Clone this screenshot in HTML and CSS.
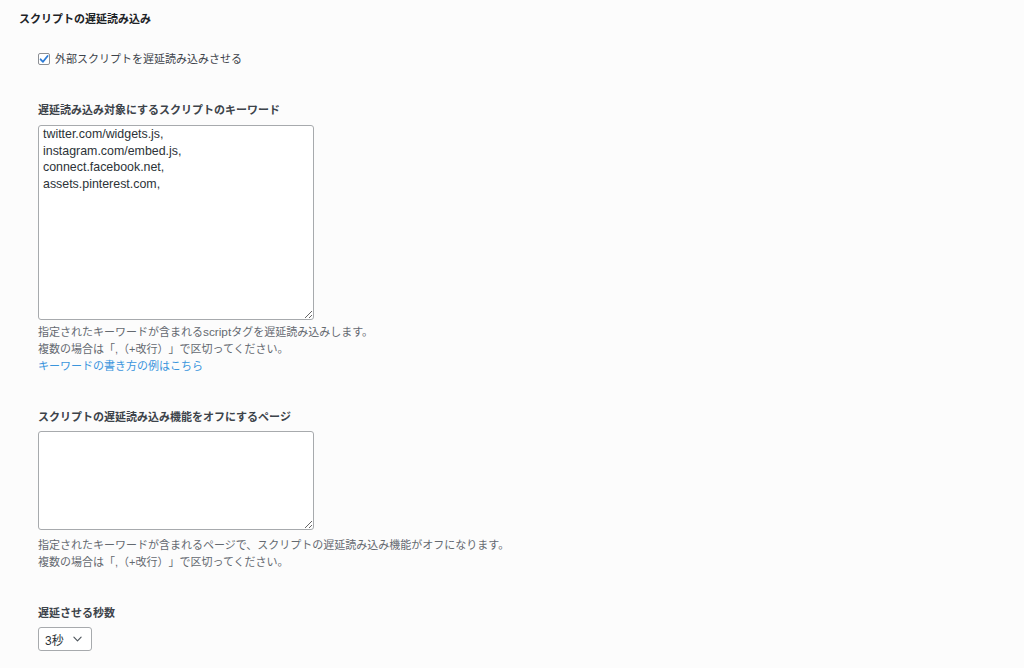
FILE: index.html
```html
<!DOCTYPE html>
<html lang="ja">
<head>
<meta charset="utf-8">
<title>スクリプトの遅延読み込み</title>
<link rel="stylesheet" href="styles.css">
</head>
<body>
<div class="page">
  <h2 class="title">スクリプトの遅延読み込み</h2>
  <div class="section">
    <label class="check-row">
      <span class="checkbox">
        <svg viewBox="0 0 12 12" width="12" height="12"><path d="M2.6 6.3 L5 8.8 L9.6 3" fill="none" stroke="#2b7bd6" stroke-width="1.8" stroke-linecap="round" stroke-linejoin="round"/></svg>
      </span>
      <span>外部スクリプトを遅延読み込みさせる</span>
    </label>

    <div class="field first">
      <div class="label">遅延読み込み対象にするスクリプトのキーワード</div>
      <textarea class="textarea tall">twitter.com/widgets.js,
instagram.com/embed.js,
connect.facebook.net,
assets.pinterest.com,</textarea>
      <p class="help">指定されたキーワードが含まれる<span class="latin">script</span>タグを遅延読み込みします。<br>複数の場合は「,（+改行）」で区切ってください。<br><a class="link" href="#">キーワードの書き方の例はこちら</a></p>
    </div>

    <div class="field second">
      <div class="label">スクリプトの遅延読み込み機能をオフにするページ</div>
      <textarea class="textarea short"></textarea>
      <p class="help help2">指定されたキーワードが含まれるページで、スクリプトの遅延読み込み機能がオフになります。<br>複数の場合は「,（+改行）」で区切ってください。</p>
    </div>

    <div class="field third">
      <div class="label">遅延させる秒数</div>
      <div class="select">
        <span>3秒</span>
        <svg viewBox="0 0 10 6" width="9" height="6"><path d="M1 1 L5 5 L9 1" fill="none" stroke="#50575e" stroke-width="1.3" stroke-linecap="round" stroke-linejoin="round"/></svg>
      </div>
    </div>
  </div>
</div>
</body>
</html>
```

FILE: styles.css
```css
html, body {
  margin: 0;
  padding: 0;
  background: #fcfcfc;
}
body {
  font-family: "Liberation Sans", "Noto Sans CJK JP", sans-serif;
  color: #3c434a;
  font-size: 11px;
  text-spacing-trim: space-all;
}
.page {
  padding: 12px 0 0 19px;
}
.title {
  margin: 0;
  font-size: 11px;
  line-height: 14px;
  font-weight: bold;
  color: #1d2327;
}
.section {
  padding-left: 19px;
}
.check-row {
  display: flex;
  align-items: center;
  gap: 5px;
  margin-top: 26px;
  height: 14px;
  line-height: 14px;
  color: #3c434a;
}
.checkbox {
  width: 10px;
  height: 10px;
  border: 1px solid #8c8f94;
  border-radius: 2px;
  background: #fff;
  display: flex;
  align-items: center;
  justify-content: center;
}
.checkbox svg {
  flex: none;
}
.field.first {
  margin-top: 37px;
}
.field.second {
  margin-top: 35px;
}
.field.third {
  margin-top: 36px;
}
.label {
  font-weight: bold;
  line-height: 14px;
  color: #3c434a;
}
.textarea {
  display: block;
  box-sizing: border-box;
  width: 276px;
  margin: 8px 0 0;
  padding: 0 4px;
  border: 1px solid #a7aaad;
  border-radius: 3px;
  background: #fff;
  font-family: "Liberation Sans", "Noto Sans CJK JP", sans-serif;
  font-size: 12.4px;
  line-height: 16.6px;
  color: #2c3338;
  resize: vertical;
}
.textarea.tall {
  height: 195px;
}
.textarea.short {
  margin-top: 7px;
  height: 99px;
}
.help {
  margin: 4px 0 0;
  line-height: 17px;
  color: #646970;
}
.latin {
  font-size: 11.8px;
}
.help2 {
  margin-top: 7px;
  line-height: 16.5px;
}
.link {
  color: #3a95dc;
  text-decoration: none;
}
.select {
  margin-top: 7px;
  box-sizing: border-box;
  width: 54px;
  height: 24px;
  border: 1px solid #a7aaad;
  border-radius: 3px;
  background: #fff;
  display: flex;
  align-items: center;
  justify-content: space-between;
  padding: 0 9px 0 6px;
  font-size: 12px;
  color: #2c3338;
}
```
